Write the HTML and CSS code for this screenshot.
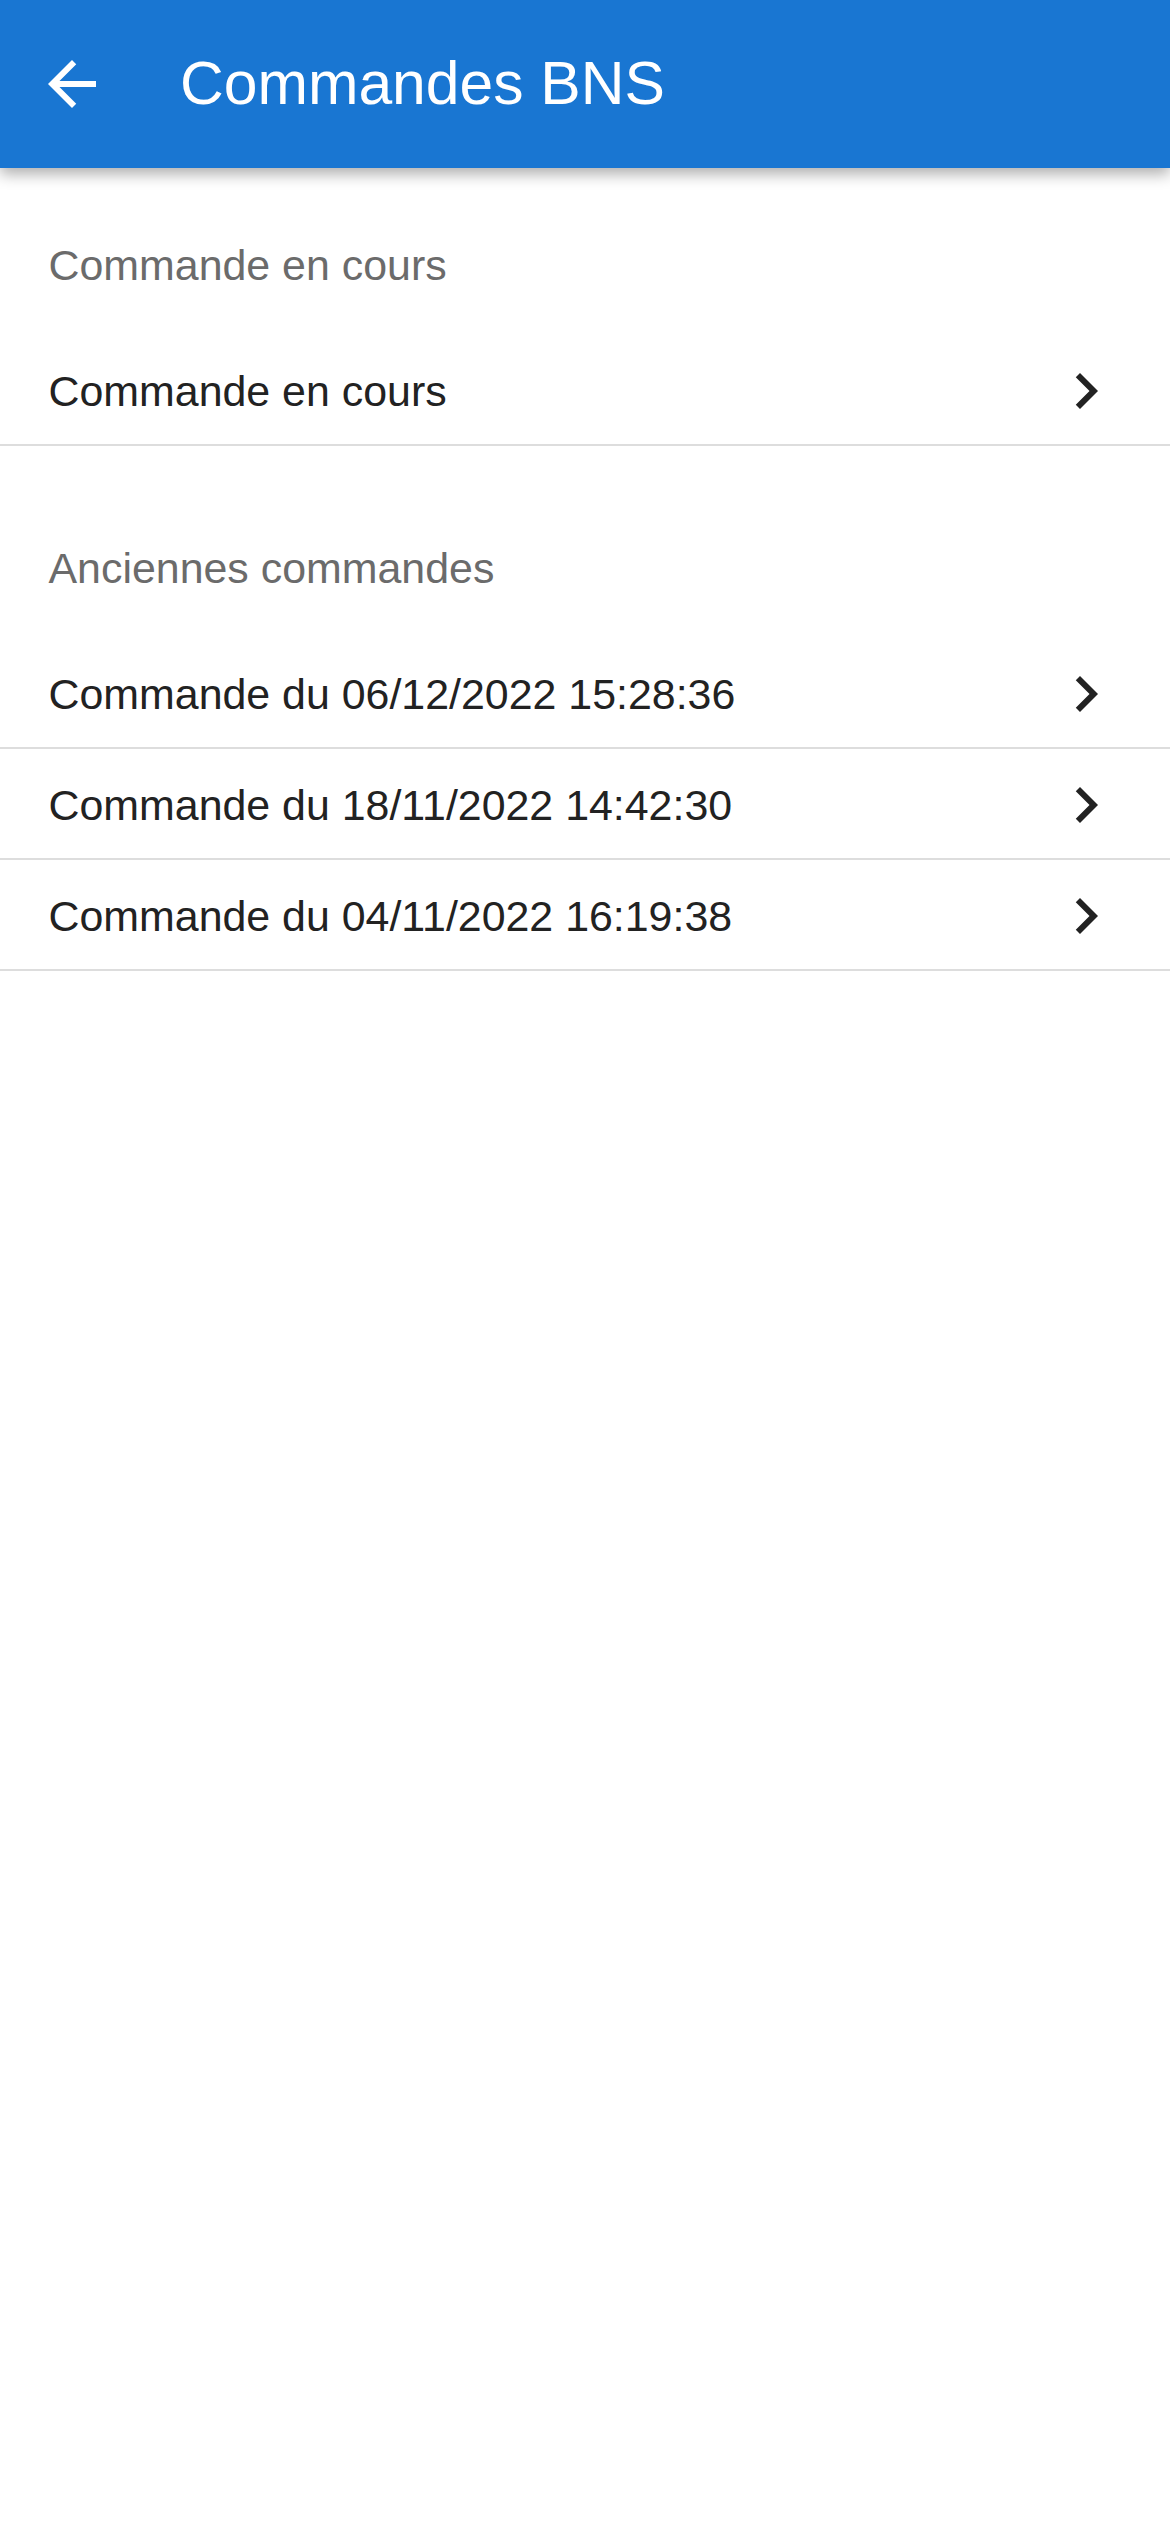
FILE: index.html
```html
<!DOCTYPE html>
<html lang="fr">
<head>
<meta charset="utf-8">
<title>Commandes BNS</title>
<link rel="stylesheet" href="styles.css">
</head>
<body>
  <header class="toolbar">
    <svg class="back" viewBox="0 0 24 24" aria-hidden="true"><path d="M20 11H7.83l5.59-5.59L12 4l-8 8 8 8 1.41-1.41L7.83 13H20v-2z"/></svg>
    <h1 class="title">Commandes BNS</h1>
  </header>
  <main>
    <section class="group">
      <div class="label first">Commande en cours</div>
      <div class="row">
        <span class="row-text">Commande en cours</span>
        <svg class="chev" viewBox="0 0 24 24" aria-hidden="true"><path d="M10 6L8.59 7.41 13.17 12l-4.58 4.59L10 18l6-6z"/></svg>
      </div>
    </section>
    <section class="group">
      <div class="label">Anciennes commandes</div>
      <div class="row">
        <span class="row-text">Commande du 06/12/2022 15:28:36</span>
        <svg class="chev" viewBox="0 0 24 24" aria-hidden="true"><path d="M10 6L8.59 7.41 13.17 12l-4.58 4.59L10 18l6-6z"/></svg>
      </div>
      <div class="row">
        <span class="row-text">Commande du 18/11/2022 14:42:30</span>
        <svg class="chev" viewBox="0 0 24 24" aria-hidden="true"><path d="M10 6L8.59 7.41 13.17 12l-4.58 4.59L10 18l6-6z"/></svg>
      </div>
      <div class="row">
        <span class="row-text">Commande du 04/11/2022 16:19:38</span>
        <svg class="chev" viewBox="0 0 24 24" aria-hidden="true"><path d="M10 6L8.59 7.41 13.17 12l-4.58 4.59L10 18l6-6z"/></svg>
      </div>
    </section>
  </main>
</body>
</html>
```

FILE: styles.css
```css
html, body {
  margin: 0;
  padding: 0;
  background: #ffffff;
}

body {
  font-family: "Liberation Sans", Arial, Helvetica, sans-serif;
  min-height: 2532px;
}

.toolbar {
  position: relative;
  z-index: 2;
  height: 168px;
  background: #1976d2;
  display: flex;
  align-items: center;
  box-shadow: 0 6px 14px rgba(0, 0, 0, 0.32);
}

.back {
  width: 72px;
  height: 72px;
  margin-left: 36px;
  fill: #ffffff;
  flex: none;
}

.title {
  margin: 0 0 0 72px;
  font-size: 60.6px;
  font-weight: 400;
  color: #ffffff;
  line-height: 1.15;
}

.label {
  font-size: 42.9px;
  line-height: 50px;
  color: #6b6b6b;
  padding: 96.5px 0 45.5px 48.5px;
}

.label.first {
  padding-top: 71.5px;
}

.row {
  box-sizing: border-box;
  height: 111px;
  display: flex;
  align-items: center;
  justify-content: space-between;
  padding: 3px 0 0 48.5px;
  border-bottom: 2px solid #dddddd;
}

.row-text {
  font-size: 42.9px;
  color: #222222;
}

.chev {
  width: 72px;
  height: 72px;
  margin-right: 48px;
  fill: #222222;
  flex: none;
}
```
